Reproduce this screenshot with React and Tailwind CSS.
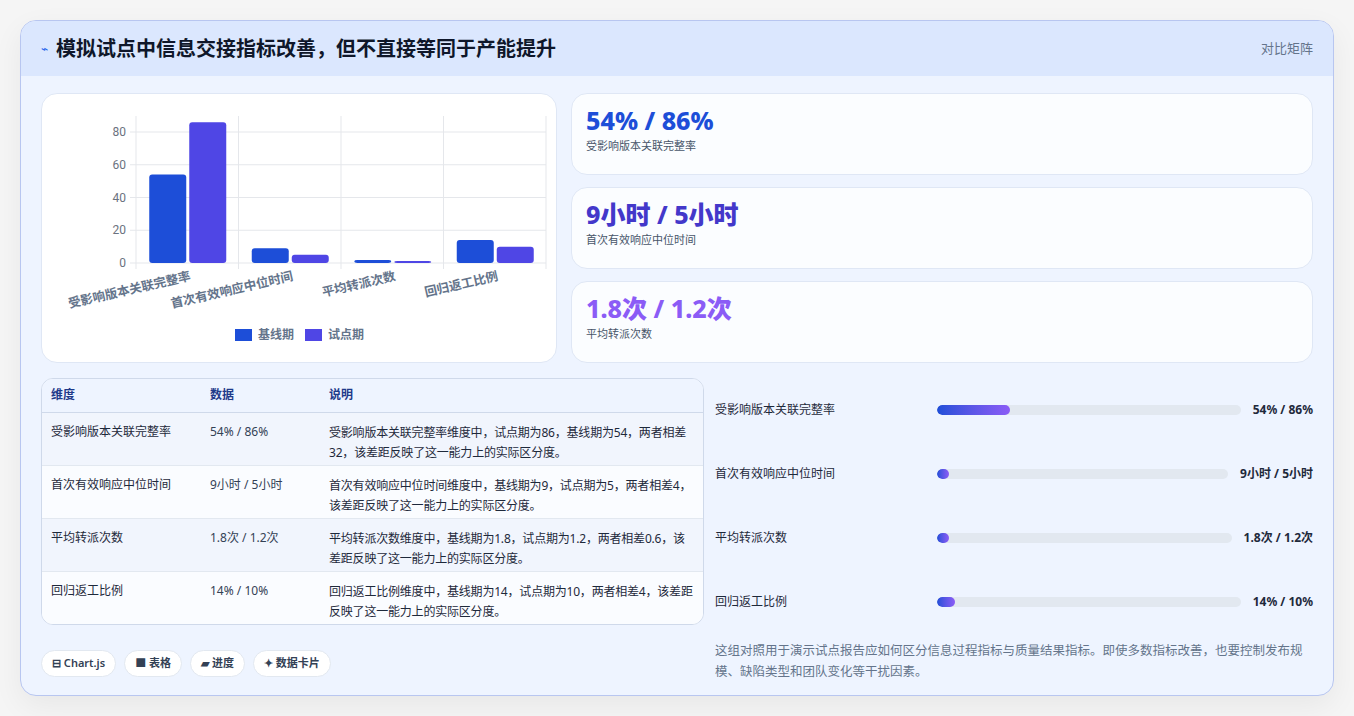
import React from 'react';

const F = { fontFamily: '"Noto Sans", "Noto Sans CJK SC", sans-serif' };

const metrics = [
  { name: '受影响版本关联完整率', val: '54% / 86%', base: 54, pilot: 86, fill: 24, note: '受影响版本关联完整率维度中，试点期为86，基线期为54，两者相差32，该差距反映了这一能力上的实际区分度。' },
  { name: '首次有效响应中位时间', val: '9小时 / 5小时', base: 9, pilot: 5, fill: 4, note: '首次有效响应中位时间维度中，基线期为9，试点期为5，两者相差4，该差距反映了这一能力上的实际区分度。' },
  { name: '平均转派次数', val: '1.8次 / 1.2次', base: 1.8, pilot: 1.2, fill: 4, note: '平均转派次数维度中，基线期为1.8，试点期为1.2，两者相差0.6，该差距反映了这一能力上的实际区分度。' },
  { name: '回归返工比例', val: '14% / 10%', base: 14, pilot: 10, fill: 6, note: '回归返工比例维度中，基线期为14，试点期为10，两者相差4，该差距反映了这一能力上的实际区分度。' },
];

const Chart = () => {
  const x0 = 94, x1 = 504, y0 = 169, k = 1.6375;
  const cw = (x1 - x0) / 4;
  return (
    <svg width="516" height="270" className="block">
      {[0, 20, 40, 60, 80].map(t => (
        <g key={t}>
          <line x1={x0} x2={x1} y1={y0 - t * k} y2={y0 - t * k} stroke="#e5e7eb" />
          <line x1={x0 - 6} x2={x0} y1={y0 - t * k} y2={y0 - t * k} stroke="#e5e7eb" />
          <text x={x0 - 10} y={y0 - t * k + 4} textAnchor="end" fontSize="12" fill="#6b7280" fontFamily="Roboto, sans-serif">{t}</text>
        </g>
      ))}
      {[0, 1, 2, 3, 4].map(i => (
        <line key={i} x1={x0 + i * cw} x2={x0 + i * cw} y1={22} y2={y0 + 6} stroke="#e5e7eb" />
      ))}
      {metrics.map((m, i) => {
        const cx = x0 + i * cw + cw / 2;
        return (
          <g key={i}>
            <rect x={cx - 38} y={y0 - m.base * k} width="37" height={m.base * k} rx="3" fill="#1d4ed8" />
            <rect x={cx + 2} y={y0 - m.pilot * k} width="37" height={m.pilot * k} rx="3" fill="#4f46e5" />
            <text x={cx + 4} y={y0 + 17} textAnchor="end" fontSize="12.5" fontWeight="600" fill="#64748b" transform={`rotate(-13 ${cx + 4} ${y0 + 17})`} style={F}>{m.name}</text>
          </g>
        );
      })}
      <rect x="193" y="235" width="17" height="12" fill="#1d4ed8" />
      <text x="216" y="245" fontSize="12" fontWeight="600" fill="#64748b" style={F}>基线期</text>
      <rect x="263" y="235" width="17" height="12" fill="#4f46e5" />
      <text x="286" y="245" fontSize="12" fontWeight="600" fill="#64748b" style={F}>试点期</text>
    </svg>
  );
};

const stats = [
  { v: '54% / 86%', l: '受影响版本关联完整率', c: 'text-[#1d4ed8]' },
  { v: '9小时 / 5小时', l: '首次有效响应中位时间', c: 'text-[#4338ca]' },
  { v: '1.8次 / 1.2次', l: '平均转派次数', c: 'text-[#8b5cf6]' },
];

export default function App() {
  return (
    <div className="min-h-[716px] bg-[#f5f5f5] pt-5 px-5" style={F}>
      <div className="rounded-2xl border border-[#b8c6f0] bg-[#eef4ff] overflow-hidden shadow-[0_10px_30px_rgba(0,0,0,0.06)]">
        <div className="h-[55px] bg-[#dbe7fe] flex items-center justify-between px-5">
          <div className="flex items-center gap-2">
            <span className="text-[#2563eb] text-xs">⌁</span>
            <h1 className="text-[20px] font-bold text-[#0f172a]">模拟试点中信息交接指标改善，但不直接等同于产能提升</h1>
          </div>
          <span className="text-[13px] text-[#64748b]">对比矩阵</span>
        </div>
        <div className="px-5 pt-[17px] pb-[13px]">
          <div className="flex gap-[14px]">
            <div className="w-[516px] h-[270px] bg-white rounded-2xl border border-[#dfe7f5]">
              <Chart />
            </div>
            <div className="flex-1 flex flex-col gap-[12px]">
              {stats.map(s => (
                <div key={s.l} className="h-[82px] rounded-2xl border border-[#dfe7f5] bg-[#fbfdff] px-[14px] pt-[10px]">
                  <div className={`text-[25px] font-extrabold leading-[32px] ${s.c}`}>{s.v}</div>
                  <div className="text-[11px] text-[#475569] mt-[2px]">{s.l}</div>
                </div>
              ))}
            </div>
          </div>
          <div className="flex gap-[11px] mt-[15px]">
            <div className="w-[663px] flex flex-col">
              <div className="rounded-xl border border-[#cfd9ea] overflow-hidden bg-white">
                <table className="w-full text-[12px] text-left">
                  <thead>
                    <tr className="h-[33px] bg-[#eef4ff] border-b border-[#cfd9ea] text-[#1e3a8a] font-semibold">
                      <th className="pl-[9px] w-[168px] font-semibold">维度</th>
                      <th className="w-[119px] font-semibold">数据</th>
                      <th className="font-semibold">说明</th>
                    </tr>
                  </thead>
                  <tbody>
                    {metrics.map((m, i) => (
                      <tr key={i} className={`h-[53px] align-top border-b border-[#e2e8f0] last:border-0 ${i % 2 === 0 ? 'bg-[#f1f5fd]' : 'bg-[#fafcff]'}`}>
                        <td className="pl-[9px] pt-[10px] text-[#1e293b]">{m.name}</td>
                        <td className="pt-[10px] text-[#334155]">{m.val}</td>
                        <td className="pt-[10px] pr-2 text-[#1e293b] leading-[20px] tracking-[-0.2px]">{m.note}</td>
                      </tr>
                    ))}
                  </tbody>
                </table>
              </div>
              <div className="flex gap-2 mt-[25px]">
                {['⊟ Chart.js', '■ 表格', '▰ 进度', '✦ 数据卡片'].map(t => (
                  <span key={t} className="h-[27px] px-[10px] flex items-center rounded-full bg-white border border-[#e2e8f0] text-[11px] font-semibold text-[#334155]">{t}</span>
                ))}
              </div>
            </div>
            <div className="flex-1 flex flex-col">
              {metrics.map((m, i) => (
                <div key={i} className="h-[64px] flex items-center gap-3 text-[12px]">
                  <span className="w-[210px] shrink-0 text-[#1e293b]">{m.name}</span>
                  <div className="flex-1 h-[10px] rounded-full bg-[#e2e8f0] overflow-hidden">
                    <div className="h-full rounded-full bg-gradient-to-r from-[#1d4ed8] to-[#8b5cf6]" style={{ width: `${m.fill}%` }} />
                  </div>
                  <span className="font-bold text-[#1e293b] whitespace-nowrap shrink-0 text-right">{m.val}</span>
                </div>
              ))}
              <p className="text-[12.5px] leading-[21px] text-[#64748b] mt-[6px]">这组对照用于演示试点报告应如何区分信息过程指标与质量结果指标。即使多数指标改善，也要控制发布规模、缺陷类型和团队变化等干扰因素。</p>
            </div>
          </div>
        </div>
      </div>
    </div>
  );
}
